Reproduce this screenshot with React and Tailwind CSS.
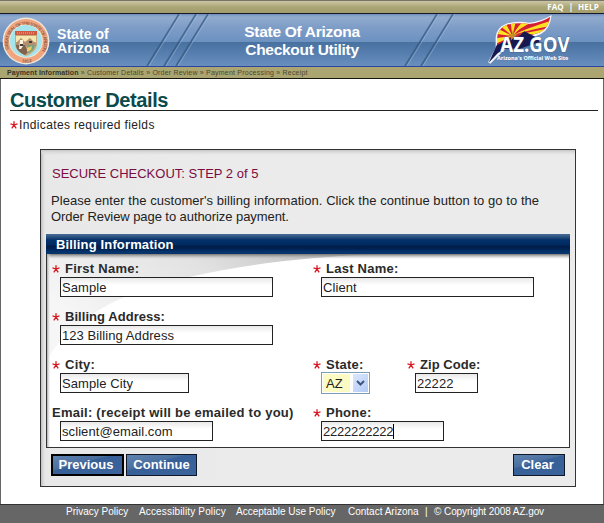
import React from 'react';

const inputStyle =
  'h-[20px] border border-[#222] bg-[linear-gradient(#e8e8e8,#fff_7px)] pl-[1px] text-[13px] leading-[19px] text-[#222] tracking-[0.08px] whitespace-pre block';

function Star({ className = '' }) {
  return (
    <svg viewBox="0 0 8 8" className={`w-[8px] h-[8px] shrink-0 ${className}`}>
      <path d="M4 4V.3M4 4 .5 2.8M4 4l3.5-1.2M4 4 1.8 7.3M4 4l2.2 3.3" stroke="#d8141c" strokeWidth="1.3" fill="none" />
    </svg>
  );
}

function Field({ label, labelClass = 'tracking-[0.25px]', required = true, children, className = '' }) {
  return (
    <div className={`h-[48px] ${className}`}>
      <div className="flex h-[17px] items-center text-[13px] font-bold leading-[16px] text-[#2a2a2a] whitespace-nowrap">
        {required && <Star className="mr-[5px]" />}
        <span className={labelClass}>{label}</span>
      </div>
      <div className="pl-[8px]">{children}</div>
    </div>
  );
}

function Seal() {
  return (
    <svg viewBox="0 0 48 48" className="w-[48px] h-[48px] shrink-0">
      <defs>
        <path id="sealTop" d="M7.5 33A18 18 0 1 1 40.5 33" />
        <path id="sealBottom" d="M12 42A21.6 21.6 0 0 0 36 42" />
      </defs>
      <circle cx="24" cy="24" r="23.4" fill="#efe6dc" />
      <circle cx="24" cy="24" r="22" fill="#f0a57e" />
      <circle cx="24" cy="24" r="16.8" fill="#f8ecd4" />
      <circle cx="24" cy="24" r="16" fill="#a4e4ec" />
      <text fontSize="4.6" fontWeight="bold" fill="#94604a" fontFamily="Liberation Sans, sans-serif">
        <textPath href="#sealTop" textLength="74" startOffset="1">GREAT SEAL OF THE STATE OF ARIZONA</textPath>
      </text>
      <text fontSize="4.5" fontWeight="bold" fill="#94604a" fontFamily="Liberation Sans, sans-serif">
        <textPath href="#sealBottom" startOffset="8.5">1912</textPath>
      </text>
      <path d="M13 14h22v14q-1 7-11 11-10-4-11-11z" fill="#c7a77c" />
      <path d="M13 14h22v4H13z" fill="#cf5a42" />
      <path d="M15 16h18" stroke="#f0b49c" strokeDasharray="1 1" />
      <path d="M14 19h20v6H14z" fill="#f6e7ae" />
      <path d="m14 26 5-5 4 4 5-4 6 6v2H14z" fill="#b59070" />
      <path d="M14 28h9l3 7-3 3q-8-3-9-9z" fill="#7d6350" />
      <path d="M25 28h8q-1 6-7 8z" fill="#77a17e" />
      <path d="M18 23h3v6l-2 3h-2z" fill="#fff1df" />
      <path d="M18 27h3v2h-3zM27 24h3v2h-3z" fill="#423d34" />
      <path d="m25 31 5-2-1 4-4 2z" fill="#e7ce65" />
    </svg>
  );
}

function Logo() {
  return (
    <svg viewBox="248 42 256 156" className="w-[85.33px] h-[52px]">
      <defs>
        <clipPath id="wing">
          <path d="M278 116Q280 84 308 74 342 66 375 72 414 67 438 50 431 87 405 98 380 104 368 112L278 150Z" />
        </clipPath>
      </defs>
      <path
        d="M274 112Q277 81 306 71 342 62 374 68 412 64 442 45 437 88 410 102L380 114 305 145 258 191 251 187 274 143Z"
        fill="#fff"
        opacity=".9"
      />
      <g clipPath="url(#wing)">
        <path d="M260 40h190v110H260z" fill="#d61f35" />
        <g fill="#ffe21f">
          <path d="M324 108 264 136 264 116Z" />
          <path d="M324 108 268 101 276 84Z" />
          <path d="M324 108 288 78 302 66Z" />
          <path d="M324 108 318 58 336 58Z" />
          <path d="M324 108Q342 75 362 60L380 68Q345 83 324 108" />
          <path d="M328 104Q370 84 441 62L437 78Q375 90 328 104" />
          <path d="M345 103Q390 95 432 85L412 98Q380 106 345 103" />
        </g>
      </g>
      <path d="m253 188 24-52 15-8 20-14 26 0 22-20 40 20 6 12-60 20-46 0-20 14Z" fill="#17184f" />
      <path d="m325 91 4 11 13-2-9 9 6 9-12-4-8 8 1-11-10-5 12-1z" fill="#c58a2c" />
      <text
        x="288" y="157" textLength="208" lengthAdjust="spacingAndGlyphs"
        fontFamily="Open Sans, Noto Sans, sans-serif" fontSize="66" fontWeight="700"
        fill="#fff" stroke="#2c4d7c" strokeWidth="2" paintOrder="stroke"
      >AZ.GOV</text>
      <text
        x="278" y="180" textLength="214" lengthAdjust="spacingAndGlyphs"
        fontFamily="Open Sans, Noto Sans, sans-serif" fontSize="18" fontWeight="700" fill="#fff"
      >Arizona's Official Web Site</text>
    </svg>
  );
}

function Slashes({ offsets }) {
  return (
    <g fill="none">
      {offsets.map((x) => (
        <g key={x}>
          <path d={`M${x} 52L${x + 32} 0`} stroke="#34577f" strokeWidth="1.6" opacity=".75" />
          <path d={`M${x + 2} 52L${x + 34} 0`} stroke="#a6c0df" strokeWidth="1" opacity=".45" />
        </g>
      ))}
    </g>
  );
}

function Button({ children, className = '' }) {
  return (
    <button
      className={`h-[22px] border border-[#101828] bg-[linear-gradient(165deg,#6083b0_0%,#4a6f9f_38%,#365f97_42%,#3a649b_100%)] text-[13px] font-bold leading-[18px] text-white whitespace-nowrap ${className}`}
    >
      {children}
    </button>
  );
}

export default function App() {
  return (
    <div className="flex h-[523px] w-[604px] flex-col overflow-hidden bg-white font-['Liberation_Sans',Arial,sans-serif]">
      <div className="flex h-[14px] shrink-0 items-center justify-end border-t border-b border-t-[#77756a] border-b-[#15172a] bg-[linear-gradient(#cbc6a4,#aba677_50%,#a39d6b)] pr-[5px] font-['Open_Sans','Noto_Sans',sans-serif] text-[8px] font-bold leading-[12px] text-white">
        <span>FAQ</span>
        <span className="mx-[5px]">|</span>
        <span className="tracking-[0.2px]">HELP</span>
      </div>

      <header className="relative flex h-[53px] shrink-0 border-b border-[#2c43a0] bg-[linear-gradient(#718fbb_0,#91abce_3px,#7d9cc6_14px,#6c92c1_28px,#49719f_28px,#527aaa_36px,#688fbe_52px)]">
        <svg viewBox="0 0 604 52" className="absolute inset-0 h-[52px] w-[604px]">
          <Slashes offsets={[147, 164, 176, 405, 421]} />
        </svg>
        <div className="relative flex w-[220px] pl-[2px] pt-[3px]">
          <Seal />
          <div className="pl-[7px] pt-[10px] text-[14px] font-bold leading-[14px] text-white">
            <div className="tracking-[0.05px]">State of</div>
            <div className="tracking-[0.15px]">Arizona</div>
          </div>
        </div>
        <div className="relative w-[164px] pt-[9px] text-center text-[15.5px] font-bold leading-[18px] tracking-[-0.28px] text-white whitespace-nowrap">
          State Of Arizona<br />Checkout Utility
        </div>
        <div className="relative ml-[103px]">
          <Logo />
        </div>
      </header>

      <nav className="flex h-[12px] shrink-0 items-center border-b border-[#15150f] bg-[#aaa571] pl-[7px] text-[7px] leading-[11px] text-[#4a472e] whitespace-pre">
        <b className="tracking-[0.1px] text-[#35331f]">Payment Information</b>
        <span className="tracking-[0.21px]"> » Customer Details » Order Review » Payment Processing » Receipt</span>
      </nav>

      <main className="h-[425px] shrink-0 border-x border-[#666]">
        <h1 className="ml-[9px] mr-[5px] h-[32px] border-b border-[#222] pt-[9px] text-[20px] font-bold leading-[24px] tracking-[-0.4px] text-[#0b4a4c]">
          Customer Details
        </h1>
        <div className="flex h-[17px] items-center pl-[9px] mt-[5px] text-[12px] leading-[16px] text-[#222]">
          <Star className="mt-[1px]" />
          <span className="tracking-[0.36px] ml-px">Indicates required fields</span>
        </div>

        <section className="relative ml-[39px] mt-[16px] h-[338px] w-[536px] border border-[#333] bg-[linear-gradient(#c5c5c5_0,#dadada_2px,transparent_5px),linear-gradient(90deg,#c0c0c0_0,#e2e2e2_3px,#e8e8e8_5px,#ebebeb_200px)] px-[5px]">
          <h2 className="pl-[6px] pt-[16px] text-[13px] leading-[16px] text-[#7b0b43]">
            SECURE CHECKOUT: STEP 2 of 5
          </h2>
          <p className="mt-[11px] h-[41px] pl-[5px] text-[13px] leading-[16px] text-[#222] whitespace-nowrap">
            <span className="tracking-[0.05px]">Please enter the customer's billing information. Click the continue button to go to the</span><br />
            <span className="tracking-[-0.07px]">Order Review page to authorize payment.</span>
          </p>
          <div className="h-[20px] bg-[linear-gradient(#4a6e98_0,#1d4677_4px,#04306a_6px,#002a60_11px,#001c48_12px,#002353_15px,#03356f_18px,#0b3565_20px)] pl-[10px] text-[13px] font-bold leading-[21px] tracking-[0.15px] text-white">
            Billing Information
          </div>
          <div className="relative h-[194px] overflow-hidden border border-t-0 border-[#333] bg-white">
            <svg viewBox="0 0 522 193" className="absolute inset-0 h-[193px] w-[522px]">
              <defs>
                <linearGradient id="sweep" x1="0" x2="1" y1=".4" y2="0">
                  <stop offset="0" stopColor="#f6f6f6" />
                  <stop offset=".5" stopColor="#e2e2e2" />
                  <stop offset="1" stopColor="#b4b4b4" />
                </linearGradient>
                <linearGradient id="topShade" x1="0" x2="0" y1="0" y2="1">
                  <stop offset="0" stopColor="#777" />
                  <stop offset="1" stopColor="#bbb" stopOpacity="0" />
                </linearGradient>
                <linearGradient id="sideShade">
                  <stop offset="0" stopColor="#aaa" />
                  <stop offset="1" stopColor="#fff" stopOpacity="0" />
                </linearGradient>
              </defs>
              <path d="M0 0H330Q220 5 147 22 45 42 4 99L0 106Z" fill="url(#sweep)" />
              <path d="M0 0h522v5H0z" fill="url(#topShade)" />
              <path d="M0 0h4v193H0z" fill="url(#sideShade)" />
            </svg>
            <form className="relative grid grid-cols-[261px_94px_1fr] pl-[5px] pt-[6px]">
              <Field label="First Name:">
                <div className={`${inputStyle} w-[213px]`}>Sample</div>
              </Field>
              <Field label="Last Name:" className="col-span-2">
                <div className={`${inputStyle} w-[213px]`}>Client</div>
              </Field>
              <Field label="Billing Address:" className="col-span-3" labelClass="tracking-[0.05px]">
                <div className={`${inputStyle} w-[213px]`}>123 Billing Address</div>
              </Field>
              <Field label="City:">
                <div className={`${inputStyle} w-[129px]`}>Sample City</div>
              </Field>
              <Field label="State:">
                <div className="-mt-px flex h-[22px] w-[49px] justify-between border border-[#7f9db9] bg-white p-px text-[13px] leading-[19px] text-[#222]">
                  <span className="w-[27px] bg-[#fdfbc4] pl-[3px]">AZ</span>
                  <span className="flex w-[15px] items-center justify-center bg-[linear-gradient(135deg,#dbe7fd,#b3cbf5)]">
                    <svg viewBox="0 0 9 6" className="h-[6px] w-[9px]">
                      <path d="m1 1 3.5 3.5L8 1" fill="none" stroke="#3d5680" strokeWidth="2" />
                    </svg>
                  </span>
                </div>
              </Field>
              <Field label="Zip Code:" labelClass="tracking-[0.05px]">
                <div className={`${inputStyle} w-[63px]`}>22222</div>
              </Field>
              <Field label="Email: (receipt will be emailed to you)" required={false}>
                <div className={`${inputStyle} w-[153px]`}>sclient@email.com</div>
              </Field>
              <Field label="Phone:" className="col-span-2">
                <div className={`${inputStyle} flex! items-center w-[123px]`}>
                  <span className="tracking-[-0.2px]">2222222222</span>
                  <span className="h-[15px] w-px bg-black" />
                </div>
              </Field>
            </form>
          </div>
          <div className="flex pl-[5px] pr-[5px] pt-[6px]">
            <Button className="w-[73px] border-2! border-black! pr-[3px] leading-[16px]!">Previous</Button>
            <Button className="ml-[2px] w-[71px]">Continue</Button>
            <Button className="ml-auto w-[52px] pr-[3px]">Clear</Button>
          </div>
        </section>
      </main>

      <footer className="flex h-[19px] shrink-0 border-t border-[#333] bg-[#666] pl-[66px] text-[10px] leading-[14px] text-white whitespace-pre">
        <span className="w-[73px]">Privacy Policy</span>
        <span className="w-[97px] tracking-[0.15px]">Accessibility Policy</span>
        <span className="w-[112px]">Acceptable Use Policy</span>
        <span className="w-[77px]">Contact Arizona</span>
        <span className="w-[9px]">|</span>
        <span className="tracking-[-0.08px]">© Copyright 2008 AZ.gov</span>
      </footer>
    </div>
  );
}
